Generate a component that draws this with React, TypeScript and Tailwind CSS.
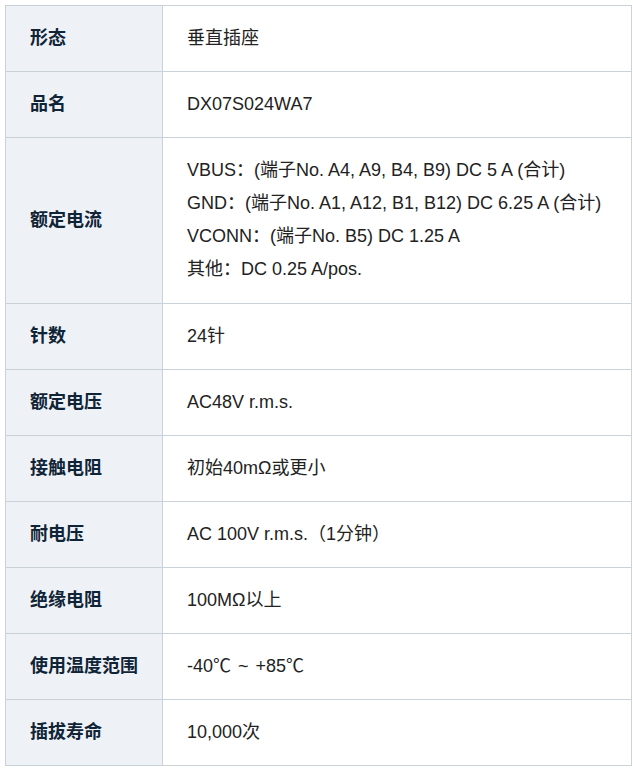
import type { ReactNode } from 'react';

const rows: { label: string; value: ReactNode[] }[] = [
  { label: '形态', value: ['垂直插座'] },
  { label: '品名', value: ['DX07S024WA7'] },
  {
    label: '额定电流',
    value: [
      'VBUS：(端子No. A4, A9, B4, B9) DC 5 A (合计)',
      'GND：(端子No. A1, A12, B1, B12) DC 6.25 A (合计)',
      'VCONN：(端子No. B5) DC 1.25 A',
      '其他：DC 0.25 A/pos.',
    ],
  },
  { label: '针数', value: ['24针'] },
  { label: '额定电压', value: ['AC48V r.m.s.'] },
  { label: '接触电阻', value: ['初始40mΩ或更小'] },
  { label: '耐电压', value: ['AC 100V r.m.s.（1分钟）'] },
  { label: '绝缘电阻', value: ['100MΩ以上'] },
  {
    label: '使用温度范围',
    value: [
      <>
        -40℃ <span className="mx-[2px]">~</span> +85℃
      </>,
    ],
  },
  { label: '插拔寿命', value: ['10,000次'] },
];

export default function App() {
  return (
    <div className="w-[633px] h-[769px] bg-white p-[5px] font-['Liberation_Sans','Noto_Sans_CJK_SC',sans-serif]">
      <table className="w-[627px] border-collapse text-[18px] leading-[33px]">
        <tbody>
          {rows.map((row) => (
            <tr key={row.label}>
              <th className="w-[157px] border border-[#c9d1d9] bg-[#eef2f6] pl-[24px] pr-2 py-4 text-left align-middle font-bold text-[#0f2436]">
                {row.label}
              </th>
              <td
                className={`border border-[#c9d1d9] pl-[24px] pr-2 align-middle text-[#222] ${
                  row.value.length > 1 ? 'pt-4 pb-[17px]' : 'py-4'
                }`}
              >
                {row.value.map((line, i) => (
                  <div key={i} className="whitespace-nowrap">
                    {line}
                  </div>
                ))}
              </td>
            </tr>
          ))}
        </tbody>
      </table>
    </div>
  );
}
